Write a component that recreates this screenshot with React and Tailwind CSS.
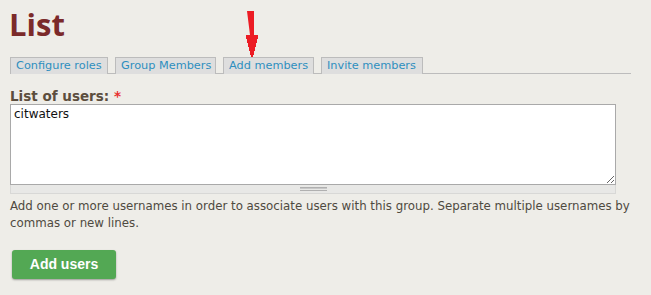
export default function App() {
  const tabs = [
    { t: "Configure roles", w: "w-[98px]" },
    { t: "Group Members", w: "w-[101px]" },
    { t: "Add members", w: "w-[91px]" },
    { t: "Invite members", w: "w-[102px]" },
  ];
  return (
    <div className="relative w-[651px] h-[295px] overflow-hidden bg-[#eeede8] px-[10px] pt-[6px]" style={{ fontFamily: '"DejaVu Sans", Verdana, sans-serif' }}>
      <h1 className="text-[31px] leading-[36px] font-bold text-[#7b2a2a] ml-[-1px]" style={{ fontFamily: '"Open Sans", "DejaVu Sans", sans-serif' }}>List</h1>
      <div className="mt-[15px] flex items-end border-b border-[#bcbcbc] mr-[10px] h-[17px] gap-[7px]">
        {tabs.map(({ t, w }) => (
          <div key={t} className={`${w} h-[17px] mb-[-1px] pl-[5px] whitespace-nowrap overflow-hidden bg-[#dedede] border border-b-0 border-[#bcbcbc] text-[11.3px] leading-[16px] text-[#2e8fbf]`}>
            {t}
          </div>
        ))}
      </div>
      <div className="mt-[14px] text-[13.5px] leading-[16px] font-bold text-[#5c4e3e]">
        List of users: <span className="text-[#e8302e]">*</span>
      </div>
      <div className="w-[606px]">
        <textarea
          defaultValue="citwaters"
          className="block w-full h-[81px] bg-white border border-[#a9a9a9] px-[3px] py-[2px] text-[12px] leading-[15px] text-[#111] resize-y outline-none"
          style={{ fontFamily: '"DejaVu Sans", Verdana, sans-serif' }}
        />
        <div className="h-[9px] bg-[#e8e8e6] border border-t-0 border-[#d8d8d6] flex items-center justify-center">
          <div className="w-[27px] h-[4px] border-y border-[#b0b0b0] relative">
            <div className="absolute left-0 right-0 top-[0px] h-[1px] bg-[#c8c8c8]" />
          </div>
        </div>
      </div>
      <p className="mt-[4px] text-[11.8px] leading-[17px] text-[#4e4a40] w-[636px]">
        Add one or more usernames in order to associate users with this group. Separate multiple usernames by commas or new lines.
      </p>
      <button className="mt-[18px] ml-[2px] w-[104px] h-[29px] rounded-[3px] bg-[#53a854] text-white text-[14px] font-bold shadow-[0_1px_2px_rgba(0,0,0,0.35)]" style={{ fontFamily: '"Liberation Sans", Arial, sans-serif' }}>
        Add users
      </button>
      <svg className="absolute left-[241px] top-[11px]" width="18" height="46" viewBox="0 0 18 46">
        <path d="M6 0h7v24h4v4h-1v4h-1v4h-1v4h-1v4h-1v2h-2v-2h-1v-4h-1v-4h-1v-4h-1v-4h-1v-4h4z" fill="#ec1c24" />
      </svg>
    </div>
  );
}
